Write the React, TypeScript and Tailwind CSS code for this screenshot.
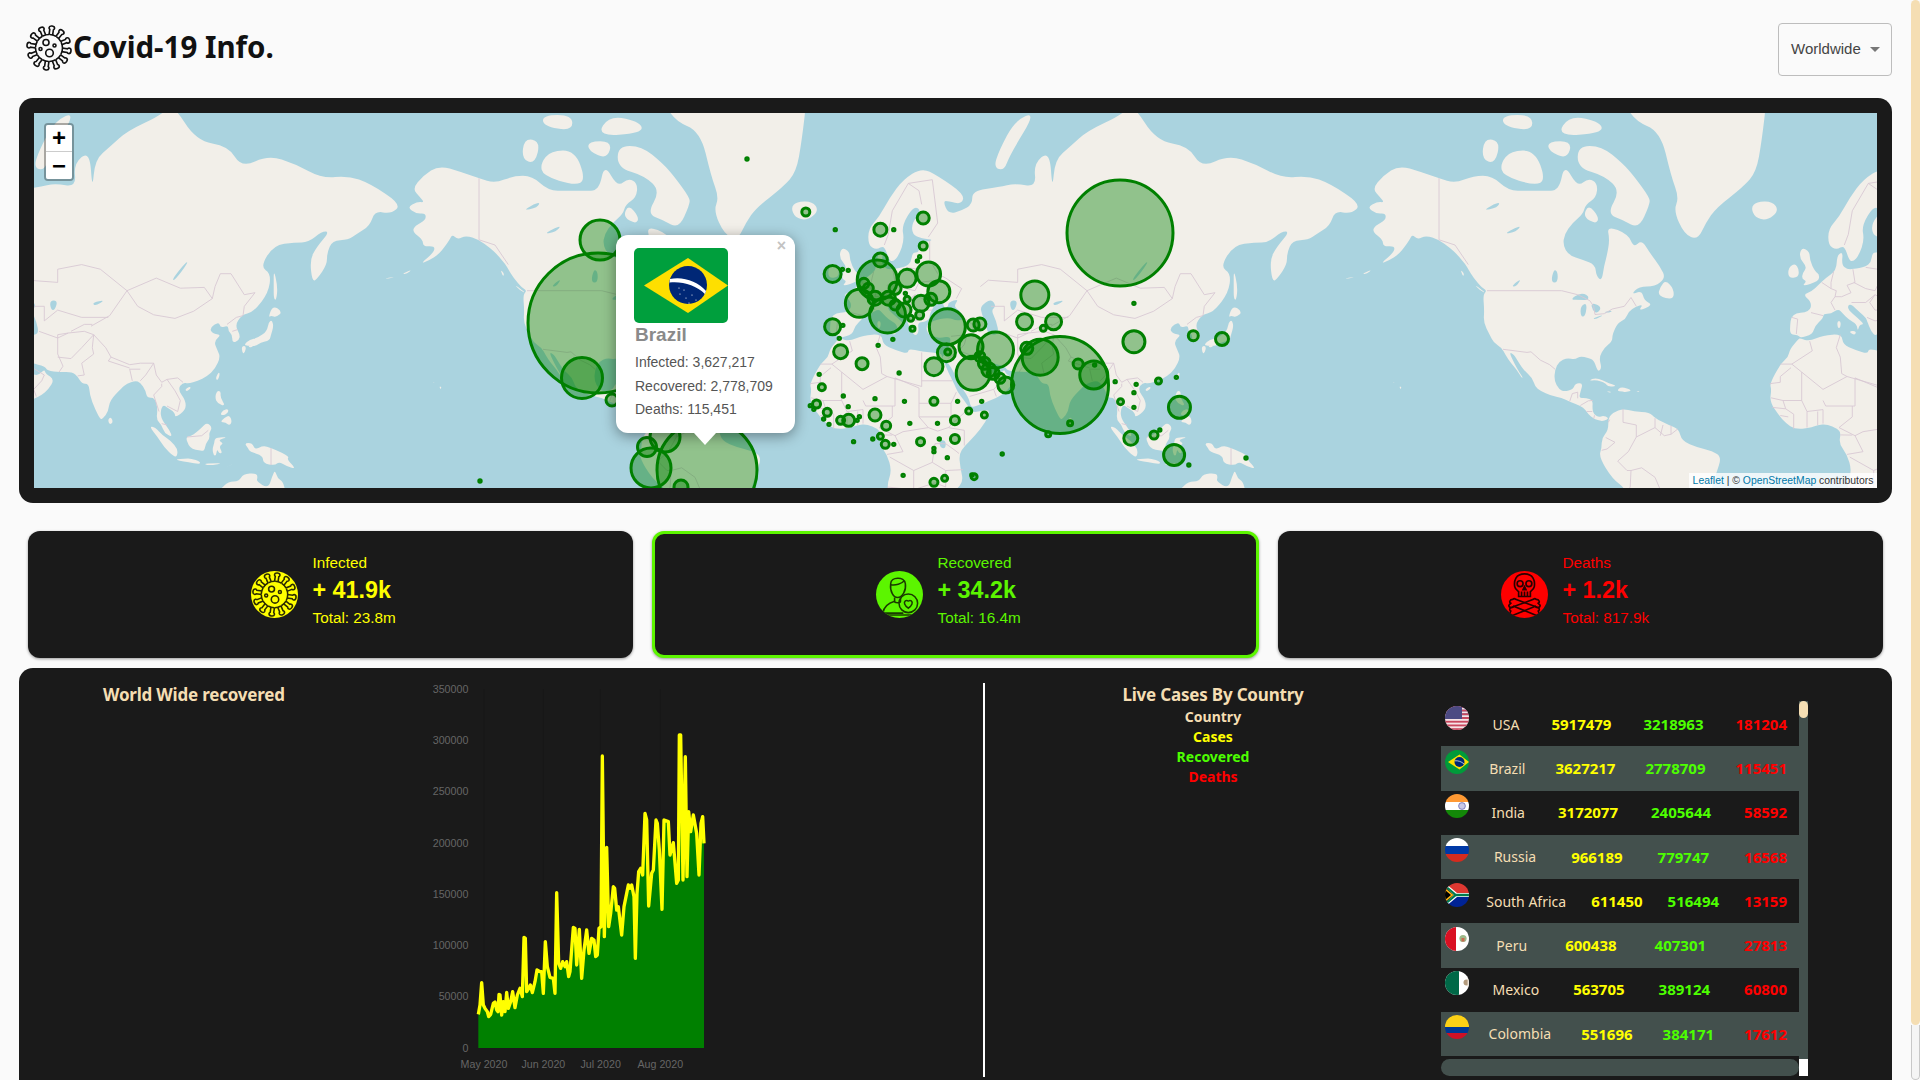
import React from "react";

type P = [number, number];
const px = (lon: number) => ((lon + 180) / 360) * 960;
const py = (lat: number) => 328 - 152.8 * Math.log(Math.tan(Math.PI / 4 + (lat * Math.PI) / 360));
const toD = (pts: P[]) =>
  "M" + pts.map(([a, b]) => `${px(a).toFixed(1)} ${py(b).toFixed(1)}`).join("L");
// closed outline with softened corners: each vertex becomes a control point between edge midpoints
const toSmooth = (pts: P[]) => {
  const xy = pts.map(([a, b]) => [px(a), py(b)]);
  const mid = (i: number) => {
    const p = xy[i % xy.length];
    const q = xy[(i + 1) % xy.length];
    return [(p[0] + q[0]) / 2, (p[1] + q[1]) / 2];
  };
  const s = mid(0);
  let d = `M${s[0].toFixed(1)} ${s[1].toFixed(1)}`;
  for (let i = 1; i <= xy.length; i++) {
    const c = xy[i % xy.length];
    const m = mid(i);
    d += `Q${c[0].toFixed(1)} ${c[1].toFixed(1)} ${m[0].toFixed(1)} ${m[1].toFixed(1)}`;
  }
  return d + "Z";
};

const LAND: P[][] = [
  // North America
  [[-166,68.3],[-163,67],[-161.5,66.3],[-164,66.4],[-168,65.6],[-164.5,64.5],[-161,64.6],[-161,63.5],[-165,62.5],[-166,61.5],[-162,60],[-162,58.7],[-157.5,58.8],[-158,57.5],[-163,55.2],[-160,55.8],[-156,57.2],[-154,58.6],[-152,60],[-151,61],[-149,60],[-146,60.8],[-141,60],[-137,58.5],[-134,57],[-131,55],[-130,54],[-128,52],[-125,49.8],[-123,49],[-124.5,48],[-124,44],[-124.3,40.5],[-122,37],[-120.5,34.5],[-117.5,33],[-116,30.5],[-114,28],[-112,26],[-110,23],[-109.5,23.2],[-111,25],[-112.8,28],[-114.7,31.5],[-113,31],[-111,28],[-109,25.5],[-106,23],[-105,20],[-103,18.5],[-99,16.7],[-95,16],[-92,14.5],[-88,13.2],[-86,11.5],[-85,10],[-83,8.3],[-80,7.3],[-78,8],[-77.5,8.7],[-79.5,9.5],[-81,8.8],[-83,10],[-83.5,12],[-83.3,15],[-86,16],[-88.5,15.8],[-88,18],[-87,21.3],[-90,21],[-90.7,19],[-94,18.2],[-96,19],[-97.8,22],[-97.5,26],[-96,28.5],[-93,29.7],[-90,29.2],[-88,30.3],[-85,29.7],[-83,29],[-81.8,26],[-81,25.2],[-80,26.5],[-81,30],[-79,33],[-76,35],[-76,37],[-74,40.5],[-71,41.5],[-70,43.5],[-67,45],[-64.5,45.5],[-66,44],[-64,44.3],[-61,45.5],[-64,46.5],[-65,49],[-69,48],[-66,50],[-60,50],[-56,52],[-58,54.5],[-62,57.5],[-65,60],[-68,58.5],[-70,61],[-78,62.5],[-77,60],[-78,57],[-79,55],[-80,51.3],[-82,52.5],[-82.5,55],[-87,56],[-92.5,57],[-94.5,59],[-94,61],[-91,63],[-87,64.5],[-86,66],[-82,67],[-81.5,69],[-85,69.7],[-89,68.5],[-94,71.5],[-96,68],[-102,68],[-108,68],[-115,68],[-121,70],[-128,70],[-135,69],[-141,69.7],[-148,70.5],[-156,71.3],[-162,70]],
  // South America
  [[-77.5,8.7],[-75.5,10.7],[-72,12],[-68,11],[-62,10.7],[-60,8.5],[-55,6],[-51,4.5],[-50,0],[-44,-2.5],[-38.5,-3.7],[-35,-6],[-37,-12],[-39,-18],[-39,-25],[-70,-25],[-70.5,-18],[-76,-14],[-81,-6],[-80,-2.5],[-80,1],[-77.5,4]],
  // Eurasia
  [[5,59],[5,62],[9,64],[13,67],[18,69.5],[25,71],[31,70],[41,67.5],[40,66],[35,66.5],[33,66.5],[35,64.5],[40,65],[44,66],[44,68],[54,68.5],[60,69],[68,68.5],[67,71.5],[73,73],[74,68],[75,72],[81,73.5],[87,75],[100,76.5],[104,77.5],[113,74],[125,73.5],[130,71],[140,72.5],[150,71.5],[160,69.7],[170,70],[178,69],[190,66],[186,64.5],[180,65],[178,62.5],[173,61],[170,60],[164,59.8],[162,57.5],[162,55],[158.5,52],[156.5,51],[155.6,56],[158,58.5],[163,61.5],[160,61.5],[155,59.5],[150,59.5],[142,59],[137,54.5],[141,53],[140,48.5],[135,44],[132,43],[130,42.5],[127.5,39.8],[129.4,37],[129,35.2],[126.5,34.5],[126.5,37],[125,38],[125,39.7],[122,39],[121.5,40.8],[118,39],[119,37.3],[122.5,37],[119.5,35],[121,32],[122,30],[120,26],[117,23.5],[113.5,22],[110,21],[108,21.5],[106,19],[109,15],[109,11.5],[105,8.7],[105,10.5],[102,12.5],[100.5,13.5],[99.5,11],[100,8],[103,4],[104,1.4],[101,3],[100,6],[98,8],[98.5,12],[97.5,16],[94.5,16],[94,18.5],[92,21.5],[90,22],[87,21],[85,19.5],[80.5,15],[80,11],[78,8.5],[77,8],[75,12],[73,17],[72.7,21],[70,21],[68.5,23.5],[66.5,25],[62,25],[57,25.5],[56.3,27],[51,28],[49,30],[48,29.5],[50,26.5],[51.5,25],[52,24],[54,24],[56,26],[56.5,24.5],[59.8,22.5],[57.5,19],[55,17],[52,15.5],[45,12.8],[43.3,12.7],[42.7,16],[39,21],[37,25],[35,28],[34.5,28],[33.5,28.5],[32.5,30],[34.3,31.3],[35.5,33.5],[36,36.5],[32,36],[30,36.3],[27.5,37],[26.5,39.5],[29,41],[35,42],[38,41],[41.5,41.5],[39,44],[37,45],[39,47],[35,46],[35,45],[33.5,44.5],[33,46],[30.5,46],[28,43],[28,41.5],[26,40.7],[23.5,40.5],[24,38],[22.8,36.5],[21,38],[19.5,41],[19,42],[15,44.5],[13.7,45.5],[12.3,45.3],[12.5,44],[16,41.8],[18.5,40],[16.7,40],[16,38],[15.7,40],[12.5,41.5],[10.5,43],[8.8,44.4],[6,43],[3.2,43],[3,41.8],[0,39.5],[-0.7,37.7],[-2,36.8],[-5.5,36],[-6.5,37],[-9,37],[-9.5,38.7],[-8.8,43],[-2,43.5],[-1.2,46],[-4.5,48],[-1.5,48.7],[1.5,50.5],[4,52],[8,53.7],[8.3,57],[10.5,57.7],[10,55],[12,54],[14.3,54],[19,54.5],[21,55.5],[21.5,57.5],[24,57.5],[24,59.3],[30,60],[25,60.2],[21.5,61],[21.3,63],[25,65],[22,65.8],[17.5,62.5],[18.5,60],[16.5,57],[14.3,55.6],[12.7,56],[11,59],[8,58]],
  // Africa
  [[-5.5,35.8],[-2,35],[3,36.8],[10,37.2],[10.5,34],[15,32.3],[20,31],[20,32.8],[25,31.7],[32.5,31.2],[32.5,30],[35,25],[35.5,24],[37.2,21],[38.5,18],[41,15],[43.2,11.8],[44.5,10.5],[51,12],[49,7],[45,2],[41,-2],[39,-5],[39.5,-10],[40.6,-15],[38,-18],[34.5,-20],[13,-20],[12,-16],[13.8,-11],[12,-5],[9,-1],[9.7,3],[8.5,4.5],[4.5,6.3],[1,6],[-2,4.8],[-7.5,4.4],[-11,6.7],[-13.5,9.5],[-17,14.7],[-16.3,19],[-17,21],[-13,27.7],[-10,30],[-9.5,32.5],[-6,35.8]],
  [[-5,50],[1.3,51.2],[1.7,52.8],[0,53.5],[-2,56],[-2,57.7],[-5,58.6],[-6,56.5],[-3,54.5],[-4.5,53.3],[-5,51.8],[-3,51.3]],
  [[-10,52],[-6.2,52.2],[-6,54],[-7.5,55.3],[-10,54.3]],
  [[-24,65.5],[-22,66.4],[-16,66.5],[-13.5,65],[-18,63.4],[-22.5,63.9]],
  [[-73,78.2],[-68,76],[-58,75],[-54,70],[-51,67],[-53,65],[-49,61],[-44,60],[-41,63],[-37,65.5],[-27,68.5],[-22,70.5],[-20,74],[-18,78],[-20,81],[-33,83.5],[-60,82]],
  [[52,71],[56,70.7],[58,72.5],[68,76.8],[60,76],[54,73]],
  [[142,54],[143.5,50],[143,46.5],[142,47],[142,50]],
  [[130.9,34],[133,35.5],[136,36],[139.5,38],[140,40.5],[141.3,41.3],[142,39.5],[141,37],[140.5,35.2],[137,34.6],[135.5,33.5],[132,33.5]],
  [[140,42],[141.7,45.3],[145.3,43.5],[143,42],[141,42.5]],
  [[130,33.5],[131.8,33.5],[131,31],[130.2,31.5]],
  [[132.5,34],[134.5,34.2],[134.2,33.3],[132.8,33]],
  [[120.2,23],[121.5,25.2],[121.8,24],[120.9,22]],
  [[108.7,19],[110.5,20],[111,19.5],[109.5,18.2]],
  [[79.8,8],[81,9],[81.8,7],[80.5,6]],
  [[120,16],[120.7,18.5],[122.2,18.4],[122,16],[124,13],[121,13.8]],
  [[122,7],[123.5,8.7],[125.5,9.7],[126.4,7],[125.3,5.8],[124,7]],
  [[122,10],[123,11.5],[125,12],[125,10.5],[123,9.5]],
  [[109,1.5],[111,1.8],[113,3.2],[115,5],[117,7],[119,5],[117.8,3],[118,1],[116.5,-1],[116,-3.8],[114,-3.5],[111.5,-3],[110,-1.5]],
  [[95.3,5.5],[97.5,5.2],[100.5,2],[103.5,0],[106,-3],[105.8,-5.8],[104.5,-5.7],[101,-2.5],[98.5,1.5]],
  [[105.3,-6.8],[108.5,-6.6],[111,-6.5],[114.5,-7.8],[114.3,-8.7],[110,-8],[106.5,-7.4]],
  [[119.8,0.5],[120.8,1.3],[125,1.5],[121,0.4],[123.3,-0.9],[121.5,-1.9],[122.8,-4.5],[121.5,-4.7],[120.8,-3],[120.4,-5.5],[119.5,-5.4],[119,-3],[119.8,-0.5]],
  [[131,-0.8],[134,-0.8],[135,-3.3],[138,-1.7],[141,-2.6],[145,-4.3],[147.8,-6],[147,-6.8],[150.5,-10.5],[147,-9.5],[144,-7.7],[142.5,-9.2],[138,-8.3],[138,-5.5],[133,-4],[132.5,-2.8]],
  [[122,-18],[125,-15],[129,-15],[130.5,-12.3],[135.5,-12],[136,-13.5],[135.5,-15],[140,-17.5],[141.5,-13],[142.5,-10.8],[143.5,-14],[145.5,-15],[146.5,-19],[150,-23],[113,-23]],
  [[116,-8.5],[119,-8.3],[123,-8.3],[119,-9],[117,-9]],
  [[124,-10],[127,-8.5],[125,-9.5]],
  [[-85,22],[-82,23.2],[-77,21],[-74.2,20.2],[-77.7,19.9],[-78.5,21.2],[-82,22.3]],
  [[-74.4,18.5],[-72.7,20],[-68.4,18.6],[-71,18],[-72,18.2]],
  [[-78.3,18.3],[-76.3,18.2],[-77,17.8]],
  [[-67.2,18.4],[-65.7,18.4],[-66,18]],
  [[-62,66],[-66,62],[-72,63.5],[-78,64.5],[-73,68],[-79,70],[-89,71],[-89,73.5],[-80,73.5],[-72,71.5],[-68,70],[-62,67]],
  [[-117,70],[-105,68.7],[-101,69.5],[-105,73],[-114,73],[-118,71.5]],
  [[-125,72],[-120,71.5],[-118,74],[-124,74.3]],
  [[-87,64],[-82,62.8],[-81,64],[-85,66]],
  [[-97,74.5],[-80,74.8],[-80,75.8],[-92,76.5]],
  [[-90,77],[-78,76.5],[-75,78],[-68,81],[-90,82]],
  [[-117,75.5],[-106,75],[-106,76.5],[-117,76.5]],
  [[-100,73],[-93,72],[-91,74],[-100,74]],
  [[-59,47.7],[-53,46.7],[-53,49.5],[-56,51.5],[-58,50]],
  [[-128,50.7],[-123.3,48.4],[-125.5,49]],
  [[-133,54],[-131.5,53],[-132,52.3]],
  [[12.5,38],[15.5,38.2],[15,36.7]],
  [[8.3,41],[9.7,41],[9.5,39],[8.5,39]],
  [[-155.8,20.2],[-155,19.7],[-155.6,19]],
  [[-157.9,21.6],[-157.7,21.3],[-158.2,21.3]],
  [[-176,52],[-172,52.3],[-176,51.8]],
  [[-170,52.9],[-166,54],[-168,53]],
];

const WATER: P[][] = [
  [[47,45],[51,47],[53,45],[51,44],[53,41],[54,37],[50,37],[49,40],[47.5,43]],
  [[-92,46.7],[-88,48.5],[-85,47.8],[-85,46.6],[-88,46.7]],
  [[-87.8,42],[-88,45],[-85.5,46],[-86,42.5]],
  [[-84,46],[-80,45],[-81.5,43],[-83.5,44]],
  [[-83.5,41.6],[-79,42.8],[-82,41.5]],
  [[-79.8,43.3],[-76.3,44],[-76.3,43.4]],
  [[-125,65],[-118,66.5],[-119,65.5]],
  [[-117,61],[-110,62.7],[-112,61.5]],
  [[-99,51],[-98,54],[-96.5,53.5],[-96.5,51]],
  [[103.8,51.6],[109,55.5],[110,55.5],[105,51.5]],
  [[58,46.5],[61,46.5],[60,44],[58.5,44]],
  [[74,46],[79,46.7],[75,45]],
  [[31.5,0.3],[34,0.3],[34,-2.8],[32,-2.6]],
  [[-114,50],[-110,52],[-112,50]],
];

const BORDERS: P[][] = [
  [[-123,49],[-95,49],[-89,48],[-84.5,46.5],[-83,45],[-82.5,42.8],[-79,43],[-76,44.3],[-71.5,45],[-69,47.3],[-67,45]],
  [[-141,69.7],[-141,60],[-135,59],[-130,55]],
  [[-117,32.5],[-108,31.5],[-106.5,31.7],[-103,29],[-99.5,27.5],[-97.5,26]],
  [[-92,14.7],[-91,17.5],[-89,18],[-89,15.8]],[[-88,13.2],[-85,14.9],[-83.3,15]],[[-85.7,11],[-83.5,11]],[[-83,8.3],[-82.7,9.6]],
  [[-72,12],[-72,7],[-67,6],[-67,1.5],[-70,-4],[-74,-7.5],[-70.5,-11],[-69,-11],[-65,-10],[-60,-13.5],[-58,-18]],
  [[-78.5,1.3],[-75,-0.5],[-78,-3],[-80,-3.5]],[[-60,8.5],[-60,5],[-56.5,2],[-54,2.5],[-51.5,4.5]],[[-57,6],[-58,2]],[[-54,5.8],[-54,2.5]],[[-67,1.5],[-60,5]],[[-69,-11],[-69.3,-17],[-70,-18.3]],[[-77,8],[-77.5,7]],
  [[-8.7,27.7],[-13,27.7]],[[-2,35],[-1,32],[-8.7,27.7],[-5,25],[3,19],[12,23.5],[25,20],[25,31.5]],[[9.5,37],[8,33],[9.5,30],[10,24.5],[12,23.5]],[[15,23],[24,19.5]],[[25,22],[36.5,22]],[[-17,21],[-13,21.5],[-13,23.5],[-9,26.5]],[[-16.5,16],[-12,15],[-5,15],[-5,25]],[[-12,15],[-11,12],[-8,10],[-8,4.5]],[[-5,15],[-3,11],[-3,5]],[[1,11],[1,6]],[[3,11.7],[3,6.5]],[[3,15],[4,13],[14,13],[14,9],[9,5]],[[15,23],[15,13],[14,13]],[[24,19.5],[24,9],[27.5,5],[31,3.7],[35,5],[41,4],[41,-1.7]],[[36,14],[38,18]],[[24,9],[36,9],[36,14],[24,14]],[[35,5],[42,11.5]],[[9,5],[15,2],[18,3.5],[27.5,5]],[[30,-1],[34,-1],[37.5,-3.5],[39,-4.7]],[[30,-1],[29,-8],[22,-11],[13,-6]],[[22,-11],[22,-18],[12,-17]],[[29,-8],[34,-11],[40.5,-10.7]],[[34,-11],[34,-17],[30,-15.5],[22,-18]],[[-16,12.5],[-11,12]],[[-13,9.5],[-10,9]],[[9.5,2.3],[14,2.2]],[[15,2],[18,-4],[12,-5]],[[-3,11],[3,11.7]],
  [[-1.5,43.3],[3,42.5]],[[-8.7,42],[-6.5,41.5],[-7,37.2]],[[2.5,51],[6,49.5],[8,49],[7.5,47.5],[6,46],[7.5,44]],[[7,53.5],[6,51],[6,49.5]],[[14.2,54],[15,51],[12,50.3],[13.5,48.5],[10,47.5],[7.5,47.5]],[[14.5,51],[19,49.5],[22.5,49],[24,51],[23.5,54],[19,54.4]],[[28,60],[28,56],[31,53],[34,52],[40,49.5],[38,47]],[[24,51],[31,51.5]],[[22.5,48],[28,46],[29.5,45]],[[22.5,48],[20.5,46],[22.5,44],[29,44]],[[13.7,46],[19,46],[22.5,48]],[[19.5,42],[22.5,41],[26,41.5]],[[11,59],[12.5,61],[14,65],[20,69],[29,69.5],[31,63],[27.5,60.5]],[[25,66],[24,68],[20,69]],
  [[36,36.5],[42,37],[44.7,37.5],[44,40],[41.5,41.5]],[[35.7,33],[39,32],[47,29.5]],[[42,37],[41,34],[39,32]],[[34.8,29.5],[39,32]],[[47,29],[56,24]],[[52,19],[55,22],[56,24]],[[43,16.5],[52,19],[53,16.5]],[[44.5,39.5],[48,38.5]],[[46,35],[48.5,30]],[[61,37],[61,31],[63,27],[61.5,25]],[[61,37],[65,37.5],[71,38],[74.5,37],[70,33],[66,29.5],[61,30]],[[74.5,37],[74,33],[74.5,31],[70,28],[71,24],[68.5,23.7]],[[74.5,37],[79,33],[81,30],[88,27.5],[92,28],[97,28],[94,24],[92,22]],[[81,30],[80,28.7],[88,26.4]],[[88,26],[89,22]],[[92,26],[88,26]],
  [[87,49],[91,45],[97,42.7],[105,41.7],[112,43.7],[119,47],[116,49.8],[107,49.6],[98,52],[87,49]],[[87,49],[80.5,42.5],[73.5,39.5]],[[47,50],[50,51.5],[61,51],[61,54],[70,55],[77,54],[87,49]],[[51,45],[56,45],[56,41],[61,44],[70,42],[80,42]],[[54,38],[61,36],[65,37.5]],[[66,38],[71,40],[74,40]],[[119,47],[120,50],[122,53],[126,53],[131,48],[135,48.5],[131,45],[130.5,42.5]],[[124.5,40],[128,42],[130.5,42.5]],[[126.5,38],[128.5,38.5]],[[97,28],[98,24],[100,21.5],[102,22.5],[106,23],[108,21.5]],[[100,21],[100,20],[97,17],[99,11]],[[102,22.5],[105,18.5],[107,15],[106,11],[102,13]],[[100,6.5],[102,6]],[[109.5,1.5],[115,2],[117.5,4]],[[141,-2.6],[141,-9]],
];

const landD = LAND.map((p) => toSmooth(p)).join("");
const waterD = WATER.map((p) => toSmooth(p)).join("");
const borderD = BORDERS.map((p) => toD(p)).join("");

const RAW: [number, number, number][] = [
  [685,36,4],[948,54,6],[852,89,6.5],[882,89,2],[751,89,2],[948,138,4],[940,170,2],[935,183,2],[745,222,8.5],[767,208,2],[780,211,2],[852,180,7],[845,240,20],[912,235,9],[960,222,12],[983,275,11],[805,310,14],[868,345,18],[815,250,5],[825,265,5],[840,295,7],[870,295,7],[885,265,6],[885,315,5],[905,330,7],[943,310,8],[965,298,6],[912,298,3],[920,355,3],[940,345,4],[908,280,2],[745,380,8],[768,376,2],[924,386,2.5],[880,418,2],[760,415,2],[847,436,2],[1002,380,18],[1060,375,6],[1075,372,6],[1198,285,14],[1175,365,8],[1240,365,8],[1217,385,3],[1420,310,2],[1420,425,11],[1553,407,5],[763,455,7],[811,491,6],[972,500,9],[1000,458,9],[1003,456,3],[1055,440,12],[1110,450,18],[1060,520,17],[1075,470,5],[1085,490,6],[1095,510,7],[1105,520,6],[1120,535,5],[1133,555,8],[1180,445,6],[1210,472,18],[1295,492,5],[1330,525,14],[1332,495,2],[1277,670,2.5],[1228,703,2.5],[1378,545,2],[1425,553,2],[1475,543,3],[1515,532,2],[1420,578,2],[1390,605,3],[1420,622,2],[1522,622,11],[1413,715,7],[1465,705,4],[1478,690,2],[1510,765,10.5],[1543,795,2],[715,523,2],[894,519,2],[721,562,3.5],[769,588,2],[840,596,2],[906,604,2],[972,604,4],[1025,604,2],[1079,604,2],[709,612,4],[695,617,2],[703,628,2],[733,637,4],[780,620,2],[725,657,2],[737,673,2],[763,661,4],[781,661,6],[800,661,2],[805,650,2],[840,645,6],[865,677,4.5],[918,670,2],[980,670,2],[1019,661,4.5],[1050,633,3],[1085,645,3],[792,725,2],[835,717,2],[852,709,3],[863,733,4],[882,733,2],[942,725,4],[984,717,2],[1019,717,4.5],[972,745,2],[972,755,2],[1002,773,2],[1125,762,2],[903,826,2],[972,847,4],[996,835,3],[1057,825,2],[1062,830,3],
];
const BUBBLES: [number, number, number][] = [
  ...RAW.map(([x, y, r]) => [500 + x / 2.24 - 34, 200 + y / 3 - 113, r] as [number, number, number]),
  ...([
    [598,323,70],[600,240,20],[582,378,20.5],[612,400,6],[707,470,50],[651,468,20],[647,447,9.5],[665,437,15],[681,487,7],
    [1120,233,53],[1060,385,48.5],[1222,339,6.5],[1246,458,2],[747,159,2],[480,481,2],
  ] as [number, number, number][]).map(([x, y, r]) => [x - 34, y - 113, r] as [number, number, number]),
].sort((a, b) => b[2] - a[2]);

const CHART: P[] = [[235,1003],[240,975],[245,908],[250,975],[255,985],[262,995],[266,1010],[272,1003],[280,970],[285,966],[290,990],[294,995],[297,943],[300,945],[305,1005],[310,965],[315,995],[320,937],[325,985],[332,965],[338,935],[345,983],[352,945],[360,925],[367,950],[372,772],[376,775],[380,935],[386,925],[391,915],[397,938],[405,905],[411,870],[420,875],[425,875],[430,940],[436,785],[442,860],[450,892],[460,895],[465,940],[470,638],[476,850],[482,865],[488,845],[495,860],[500,845],[506,890],[510,875],[520,742],[525,745],[530,855],[538,748],[545,895],[552,810],[560,750],[567,820],[575,775],[582,780],[587,830],[592,825],[597,745],[603,740],[607,228],[609,400],[613,770],[620,502],[626,740],[632,700],[640,620],[644,625],[650,690],[655,680],[665,765],[672,680],[680,640],[685,615],[690,625],[695,615],[702,650],[706,835],[711,640],[716,575],[722,565],[728,585],[735,400],[740,420],[746,678],[755,580],[760,570],[768,420],[772,430],[778,510],[786,688],[792,420],[805,425],[810,525],[820,488],[830,610],[835,600],[838,165],[842,165],[849,600],[856,230],[861,590],[866,395],[872,455],[880,405],[890,460],[897,585],[903,430],[908,410],[912,490]];
const chartLine = CHART.map(([x, y]) => `${x},${y}`).join(" ");
const chartArea = `235,1104 ${chartLine} 912,1104`;

function WorldMap() {
  return (
    <svg className="block w-full h-full" viewBox="0 0 1843 375">
      <rect width="1843" height="375" fill="#aad3df" />
      {[-619, 341, 1301].map((dx) => (
        <g key={dx} transform={`translate(${dx} 0)`}>
          <path d={landD} fill="#f2efe9" />
          <path d={waterD} fill="#aad3df" />
          <path d={borderD} fill="none" stroke="#d8c8d4" strokeWidth="0.9" />
        </g>
      ))}
      {BUBBLES.map(([x, y, r], i) => (
        <circle key={i} cx={x} cy={y} r={r <= 2 ? 1.2 : r} fill="#008000" fillOpacity="0.4" stroke="#008000" strokeWidth="3" />
      ))}
    </svg>
  );
}

function VirusIcon() {
  return (
    <svg viewBox="0 0 48 48" className="w-full h-full" fill="none" stroke="currentColor" strokeWidth="1.6">
      {Array.from({ length: 12 }).map((_, i) => (
        <g key={i} transform={`rotate(${i * 30 + 8} 24 24)`}>
          <path d="M22.2 11 V5.5 a2.2 2.2 0 0 1 -1 -1.5 a2.8 2.2 0 0 1 5.6 0 a2.2 2.2 0 0 1 -1 1.5 V11" />
        </g>
      ))}
      <circle cx="24" cy="24" r="13.5" strokeDasharray="6.6 0.5" />
      <circle cx="21" cy="18.5" r="3" />
      <circle cx="24.5" cy="29" r="3.8" />
      <circle cx="15.5" cy="25" r="1.5" />
      <circle cx="29.5" cy="21.5" r="1.5" />
    </svg>
  );
}

function PersonIcon() {
  return (
    <svg viewBox="0 0 48 48" className="w-full h-full" fill="none" stroke="#1a3a00" strokeWidth="1.6">
      <path d="M15 13 C15 6 29 5 30 13 C31 20 27 27 22 27 C18 27 14 21 15 13 Z" />
      <path d="M15 14 C20 15 26 13 29 10" />
      <path d="M19 27 V31 C19 33 25 33 25 31 V27" />
      <path d="M19 31 C12 33 8 37 7 43 H28" />
      <circle cx="33" cy="33" r="9.5" />
      <path d="M33 38 C29 35 28 32 30 30.5 C31.5 29.5 33 30.5 33 31.5 C33 30.5 34.5 29.5 36 30.5 C38 32 37 35 33 38 Z" />
      <path d="M6 45 H40" />
    </svg>
  );
}

function SkullIcon() {
  return (
    <svg viewBox="0 0 48 48" className="w-full h-full" fill="none" stroke="#2a0000" strokeWidth="1.7">
      <path d="M24 3 C15 3 13 10 14 16 C14.5 19 17 20 18 21 V26 H30 V21 C31 20 33.5 19 34 16 C35 10 33 3 24 3 Z" />
      <circle cx="19.5" cy="13" r="3" />
      <circle cx="28.5" cy="13" r="3" />
      <path d="M24 16 L22.5 19 H25.5 Z" />
      <path d="M21 21 V26 M24 21 V26 M27 21 V26" />
      <path d="M12 29 C9 29 8 32 10 33 L8 35 C8 38 12 38 13 36 L35 45 C37 46 40 44 38 41 C40 40 39 37 37 37 L15 29 C14 28 13 28 12 29 Z" />
      <path d="M36 29 C39 29 40 32 38 33 L40 35 C40 38 36 38 35 36 L13 45 C11 46 8 44 10 41 C8 40 9 37 11 37 L33 29 C34 28 35 28 36 29 Z" />
    </svg>
  );
}

const FLAG = "w-[24px] h-[24px] rounded-full shrink-0 mt-[-13px]";
const FLAGS: Record<string, React.ReactNode> = {
  USA: (
    <svg viewBox="0 0 24 24" className={FLAG}>
      <rect width="24" height="24" fill="#f6e3e6" />
      {[0, 3.7, 7.4, 11.1, 14.8, 18.5, 22.2].map((y) => <rect key={y} y={y} width="24" height="1.85" fill="#c9475e" />)}
      <rect width="24" height="13" fill="#4c4a83" />
      <rect x="17" y="0" width="7" height="1.85" fill="#c9475e" />
      <rect x="17" y="1.85" width="7" height="1.85" fill="#f6e3e6" />
      <rect x="17" y="3.7" width="7" height="1.85" fill="#c9475e" />
      <rect x="17" y="5.55" width="7" height="1.85" fill="#f6e3e6" />
      <rect x="17" y="7.4" width="7" height="1.85" fill="#c9475e" />
      <rect x="17" y="9.25" width="7" height="1.85" fill="#f6e3e6" />
      <rect x="17" y="11.1" width="7" height="1.9" fill="#c9475e" />
    </svg>
  ),
  Brazil: (
    <svg viewBox="0 0 24 24" className={FLAG}>
      <rect width="24" height="24" fill="#009b3a" />
      <path d="M3 12 L14.5 4.5 L24 12 L14.5 19.5 Z" fill="#fedf00" />
      <circle cx="14.5" cy="12" r="5" fill="#002776" />
      <path d="M9.8 10.8 C13 10.5 16.5 11.5 19 14" stroke="#fff" strokeWidth="0.7" fill="none" />
    </svg>
  ),
  India: (
    <svg viewBox="0 0 24 24" className={FLAG}>
      <rect width="24" height="8" fill="#ff9933" />
      <rect y="8" width="24" height="8" fill="#fff" />
      <rect y="16" width="24" height="8" fill="#138808" />
      <circle cx="17" cy="12" r="3.4" fill="#c9c9e8" stroke="#5b5ba8" strokeWidth="0.7" />
    </svg>
  ),
  Russia: (
    <svg viewBox="0 0 24 24" className={FLAG}>
      <rect width="24" height="8" fill="#fff" />
      <rect y="8" width="24" height="8" fill="#0039a6" />
      <rect y="16" width="24" height="8" fill="#d52b1e" />
    </svg>
  ),
  "South Africa": (
    <svg viewBox="0 0 24 24" className={FLAG}>
      <rect width="24" height="12" fill="#de3831" />
      <rect y="12" width="24" height="12" fill="#002395" />
      <path d="M0 2 L10 12 L0 22 Z M0 2" fill="#000" />
      <path d="M0 0 L12 10 H24 V14 H12 L0 24 V20 L9 12 L0 4 Z" fill="#fff" />
      <path d="M0 1.5 L11 10.8 H24 V13.2 H11 L0 22.5 V20 L9 12 L0 4 Z" fill="#007a4d" />
      <path d="M0 5 L8.5 12 L0 19 Z" fill="#ffb612" />
      <path d="M0 7 L6 12 L0 17 Z" fill="#000" />
    </svg>
  ),
  Peru: (
    <svg viewBox="0 0 24 24" className={FLAG}>
      <rect width="24" height="24" fill="#fff" />
      <rect width="11" height="24" fill="#d91023" />
      <circle cx="18" cy="11.5" r="3.6" fill="#9db98a" />
      <rect x="16.5" y="11" width="3" height="3.5" fill="#c96a50" />
    </svg>
  ),
  Mexico: (
    <svg viewBox="0 0 24 24" className={FLAG}>
      <rect width="24" height="24" fill="#fff" />
      <rect width="14" height="24" fill="#006847" />
      <circle cx="21.5" cy="11.5" r="3" fill="#b49b7d" />
      <rect x="22.6" width="1.4" height="24" fill="#f0e8e0" />
    </svg>
  ),
  Colombia: (
    <svg viewBox="0 0 24 24" className={FLAG}>
      <rect width="24" height="12" fill="#fcd116" />
      <rect y="12" width="24" height="6" fill="#003893" />
      <rect y="18" width="24" height="6" fill="#ce1126" />
    </svg>
  ),
};

const ROWS = [
  { n: "USA", a: "5917479", b: "3218963", c: "181204", gap: "gap-[32px]" },
  { n: "Brazil", a: "3627217", b: "2778709", c: "115451", gap: "gap-[30px]" },
  { n: "India", a: "3172077", b: "2405644", c: "58592", gap: "gap-[33px]" },
  { n: "Russia", a: "966189", b: "779747", c: "16568", gap: "gap-[35px]" },
  { n: "South Africa", a: "611450", b: "516494", c: "13159", gap: "gap-[25px]" },
  { n: "Peru", a: "600438", b: "407301", c: "27813", gap: "gap-[38px]" },
  { n: "Mexico", a: "563705", b: "389124", c: "60800", gap: "gap-[34px]" },
  { n: "Colombia", a: "551696", b: "384171", c: "17612", gap: "gap-[30px]" },
];

function StatCard({ width, label, value, total, color, border, icon }: { width: string; label: string; value: string; total: string; color: string; border: string; icon: React.ReactNode }) {
  return (
    <div className={`${width} shrink-0 h-[127px] rounded-[12px] bg-[#1a1a1a] shadow-[0_1px_3px_rgba(0,0,0,0.4)] flex items-center justify-center gap-[15px] pr-[14px] box-border font-['Liberation_Sans',sans-serif] ${border} ${color}`}>
      {icon}
      <div className="pb-[9px] w-[84px] whitespace-nowrap">
        <div className="text-[15.3px] leading-[27px]">{label}</div>
        <div className="text-[23.3px] leading-[28px] font-bold">{value}</div>
        <div className="text-[15.3px] leading-[27px]">{total}</div>
      </div>
    </div>
  );
}

export default function App() {
  return (
    <div className="flex w-[1920px] h-[1080px] overflow-hidden bg-[#fafafa]">
      <div className="w-[1911px] shrink-0 px-[19px]">
        <header className="h-[98px] flex items-center justify-between pl-[6px]">
          <div className="flex items-center text-[#111111]">
            <div className="w-[48px] h-[48px] mt-[-2px]"><VirusIcon /></div>
            <h1 className="text-[29.5px] font-bold font-['Noto_Sans',sans-serif] leading-none mt-[-5px]">Covid-19 Info.</h1>
          </div>
          <div className="w-[114px] h-[53px] box-border border border-[#bdbdbd] rounded-[4px] flex items-center pl-[12px] gap-[9px] font-['Liberation_Sans',sans-serif] text-[15px] text-[#444444]">
            <span>Worldwide</span>
            <span className="w-0 h-0 border-x-[5px] border-x-transparent border-t-[5px] border-t-[#777777]" />
          </div>
        </header>

        <section className="h-[405px] bg-[#1a1a1a] rounded-[14px] p-[15px] box-border">
          <div className="relative w-full h-full overflow-hidden">
            <WorldMap />
            <div className="absolute left-[10px] top-[10px] w-[30px] rounded-[4px] border-2 border-[rgba(0,0,0,0.3)] bg-clip-padding box-border font-['Liberation_Sans',sans-serif] text-black">
              <div className="h-[27px] bg-white border-b border-[#cccccc] rounded-t-[2px] flex items-center justify-center text-[24px] font-bold leading-none">+</div>
              <div className="h-[27px] bg-white rounded-b-[2px] flex items-center justify-center text-[24px] font-bold leading-none">−</div>
            </div>
            <div className="absolute left-[582px] top-[122px] w-[179px] h-[198px] bg-white rounded-[12px] shadow-[0_3px_14px_rgba(0,0,0,0.4)] pl-[18px] pt-[13px] box-border font-['Liberation_Sans',sans-serif] text-[#555555]">
              <span className="absolute right-[9px] top-[3px] text-[16px] font-bold leading-[16px] text-[#c3c3c3]">×</span>
              <svg viewBox="0 0 94 75" className="block w-[94px] h-[75px] rounded-[5px]">
                <rect width="94" height="75" fill="#009f3d" />
                <path d="M10 37.5 L54 10 L94 37.5 L54 65 Z" fill="#fedf00" />
                <circle cx="54" cy="37" r="19" fill="#002776" />
                <path d="M36 31 C48 28 64 33 72 43 L71 46 C62 37 48 33 35.5 34.5 Z" fill="#ffffff" />
                {[[46,46],[52,50],[58,47],[50,42],[62,52],[55,55],[45,40]].map(([x, y]) => <circle key={`${x}-${y}`} cx={x} cy={y} r="0.6" fill="#ffffff" />)}
              </svg>
              <div className="text-[19px] font-bold text-[#8a8a8a] leading-[24px] mt-[0px] pl-[1px]">Brazil</div>
              <div className="text-[14px] leading-[23.5px] mt-[4px] pl-[1px]">
                <div>Infected: 3,627,217</div>
                <div>Recovered: 2,778,709</div>
                <div>Deaths: 115,451</div>
              </div>
              <div className="absolute left-[78px] bottom-[-12px] w-0 h-0 border-x-[11px] border-x-transparent border-t-[12px] border-t-white" />
            </div>
            <div className="absolute right-0 bottom-0 h-[15px] w-[188px] bg-[rgba(255,255,255,0.8)] text-[10.4px] leading-[15px] text-center whitespace-nowrap font-['Liberation_Sans',sans-serif] text-[#333333]">
              <span className="text-[#0078a8]">Leaflet</span> | © <span className="text-[#0078a8]">OpenStreetMap</span> contributors
            </div>
          </div>
        </section>

        <section className="flex gap-[19px] ml-[9px] mt-[28px]">
          <StatCard width="w-[605px]" label="Infected" value="+ 41.9k" total="Total: 23.8m" color="text-[#ffff00]" border=""
            icon={<div className="w-[47px] h-[47px] rounded-full bg-[#ffff00] text-[#2a2a00] shrink-0"><VirusIcon /></div>} />
          <StatCard width="w-[607px]" label="Recovered" value="+ 34.2k" total="Total: 16.4m" color="text-[#5cf500]" border="border-[3px] border-[#5cf500]"
            icon={<div className="w-[47px] h-[47px] rounded-full bg-[#5cf500] shrink-0 overflow-hidden"><PersonIcon /></div>} />
          <StatCard width="w-[605px]" label="Deaths" value="+ 1.2k" total="Total: 817.9k" color="text-[#ff0000]" border=""
            icon={<div className="w-[47px] h-[47px] rounded-full bg-[#ff0000] shrink-0 overflow-hidden"><SkullIcon /></div>} />
        </section>

        <section className="flex h-[440px] mt-[10px] bg-[#1a1a1a] rounded-[14px] items-start">
          <div className="flex w-[966px] h-[394px] mt-[15px] border-r-2 border-white box-border">
            <h2 className="w-[381px] pl-[84px] shrink-0 text-[17px] leading-[24px] font-bold text-[#f5deb3] font-['Noto_Sans',sans-serif] tracking-[-0.2px]">World Wide recovered</h2>
            <svg viewBox="0 0 1200 1200" className="block w-[400px] h-[400px] mt-[-3px] shrink-0">
              {[252, 430, 601, 781].map((x) => <line key={x} x1={x} x2={x} y1="27" y2="1104" stroke="#161616" strokeWidth="2" />)}
              <polygon points={chartArea} fill="#008000" />
              <polyline points={chartLine} fill="none" stroke="#ffff00" strokeWidth="10" strokeLinejoin="round" />
              <g fontFamily="'Liberation Sans',sans-serif" fontSize="32" fill="#666666" textAnchor="end">
                {[["350000",38],["300000",191],["250000",344],["200000",500],["150000",653],["100000",806],["50000",959],["0",1115]].map(([t, y]) => (
                  <text key={t as string} x="205" y={y as number} dominantBaseline="auto">{t}</text>
                ))}
              </g>
              <g fontFamily="'Liberation Sans',sans-serif" fontSize="32" fill="#666666" textAnchor="middle">
                {[["May 2020",252],["Jun 2020",430],["Jul 2020",602],["Aug 2020",781]].map(([t, x]) => (
                  <text key={t as string} x={x as number} y="1164">{t}</text>
                ))}
              </g>
            </svg>
          </div>
          <div className="flex mt-[15px] font-['Noto_Sans',sans-serif]">
            <div className="w-[456px] text-center font-bold">
              <div className="text-[17px] leading-[24px] text-[#f5deb3] tracking-[-0.2px]">Live Cases By Country</div>
              <div className="text-[14px] leading-[20px] text-[#f5deb3]">Country</div>
              <div className="text-[14px] leading-[20px] text-[#ffff00]">Cases</div>
              <div className="text-[14px] leading-[20px] text-[#4dff00]">Recovered</div>
              <div className="text-[14px] leading-[20px] text-[#ff0000]">Deaths</div>
            </div>
            <div className="w-[367px] mt-[18px]">
              <div className="flex h-[358px]">
                <div className="w-[358px] pt-[1px] overflow-hidden">
                  {ROWS.map((r, i) => (
                    <div key={r.n} className={`flex items-center h-[44.25px] pl-[4px] pr-[12px] text-[15px] ${i % 2 === 1 ? "bg-[#43504d]" : ""}`}>
                      {FLAGS[r.n]}
                      <div className={`ml-auto flex items-center ${r.gap}`}>
                        <span className="text-[#f5deb3] text-[14px]">{r.n}</span>
                        <span className="font-bold text-[#ffff00]">{r.a}</span>
                        <span className="font-bold text-[#4dff00]">{r.b}</span>
                        <span className="font-bold text-[#ff0000]">{r.c}</span>
                      </div>
                    </div>
                  ))}
                </div>
                <div className="w-[9px] bg-[#43504d]">
                  <div className="h-[17px] rounded-full bg-[#f5deb3]" />
                </div>
              </div>
              <div className="flex h-[17px]">
                <div className="w-[358px] rounded-full bg-[#43504d]" />
                <div className="w-[9px] bg-white" />
              </div>
            </div>
          </div>
        </section>
      </div>
      <aside className="w-[9px] h-full flex flex-col">
        <div className="h-[1025px] rounded-full bg-[#f5deb3]" />
        <div className="flex-1 rounded-b-full bg-[#f5f5f5] border-x border-b border-[#c8c8c8]" />
      </aside>
    </div>
  );
}
